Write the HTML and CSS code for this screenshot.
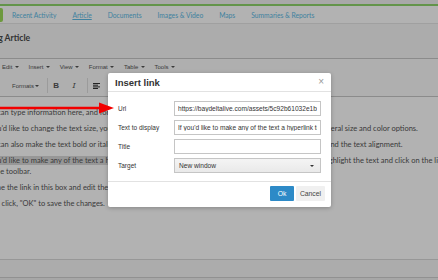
FILE: index.html
```html
<!DOCTYPE html>
<html lang="en">
<head>
    <meta charset="UTF-8">
    <meta name="viewport" content="width=device-width, initial-scale=1.0">
    <title>Editing Article</title>
    <link rel="stylesheet" href="styles.css">
</head>
<body>
    <div class="page">
        <div class="topbar"></div>
        <nav class="tabs">
            <a href="#" class="new-btn">New</a>
            <a href="#">Recent Activity</a>
            <a href="#" class="current">Article</a>
            <a href="#">Documents</a>
            <a href="#">Images &amp; Video</a>
            <a href="#">Maps</a>
            <a href="#">Summaries &amp; Reports</a>
        </nav>
        <div class="title-bar">
            <h1>Editing Article</h1>
        </div>

        <div class="editor">
            <div class="menubar">
                <span class="menu">Edit <i class="caret"></i></span>
                <span class="menu">Insert <i class="caret"></i></span>
                <span class="menu">View <i class="caret"></i></span>
                <span class="menu">Format <i class="caret"></i></span>
                <span class="menu">Table <i class="caret"></i></span>
                <span class="menu">Tools <i class="caret"></i></span>
            </div>
            <div class="toolbar">
                <span class="tool formats">Formats <i class="caret"></i></span>
                <span class="sep"></span>
                <span class="tool bold">B</span>
                <span class="tool italic">I</span>
                <span class="sep"></span>
                <span class="tool">
                    <svg width="7" height="6" viewBox="0 0 7 6"><path d="M0 0.5H7M0 2.2H5M0 3.9H7M0 5.5H5" stroke="#333" stroke-width="1"/></svg>
                </span>
                <span class="tool">
                    <svg width="7" height="6" viewBox="0 0 7 6"><path d="M0 0.5H7M1 2.2H6M0 3.9H7M1 5.5H6" stroke="#333" stroke-width="1"/></svg>
                </span>
            </div>
            <div class="content">
                <p>You can type information here, and format it using the toolbar above.</p>
                <p>If you'd like to change the text size, you can use the Formats dropdown menu in the toolbar, which has several size and color options.</p>
                <p>You can also make the text bold or italic using the buttons in the toolbar, and change the font, the indent and the text alignment.</p>
                <p><span class="selected">If you'd like to make any of the text a hyperlink</span> to another page on this website or an external site, then highlight the text and click on the link icon on the toolbar.</p>
                <p>Define the link in this box and edit the display text if needed.</p>
                <p>Then click, "OK" to save the changes.</p>
            </div>
            <div class="statusbar"></div>
        </div>
        <div class="page-footer"></div>
    </div>

    <div class="backdrop"></div>

    <div class="dialog">
        <div class="dialog-head">
            <span class="dialog-title">Insert link</span>
            <span class="close">&times;</span>
        </div>
        <div class="dialog-body">
            <label for="url">Url</label>
            <input type="text" id="url" value="https://baydeltalive.com/assets/5c92b61032e1b0a1e8a5a7c1">

            <label for="text">Text to display</label>
            <input type="text" id="text" value="If you'd like to make any of the text a hyperlink to another page">

            <label for="title">Title</label>
            <input type="text" id="title">

            <label for="target">Target</label>
            <div class="select" id="target">New window <i class="caret"></i></div>
        </div>
        <div class="dialog-foot">
            <button class="ok">Ok</button>
            <button class="cancel">Cancel</button>
        </div>
    </div>

    <svg class="arrow" width="116" height="14" viewBox="0 0 116 14">
        <path d="M0 7H102" stroke="#f20000" stroke-width="2.4"/>
        <polygon points="99,1.5 114,7 99,12.5" fill="#f20000"/>
    </svg>
</body>
</html>
```

FILE: styles.css
```css
body {
    margin: 0;
    width: 438px;
    height: 280px;
    overflow: hidden;
    background-color: #fff;
    position: relative;
}
.page {
    margin-left: -30px;
    width: 496px;
    font-family: Lato, "Open Sans", sans-serif;
    color: #555;
}
.topbar {
    height: 4px;
    background-color: #f1f1f1;
    border-bottom: 2px solid #8fd46a;
}
.tabs {
    display: flex;
    align-items: center;
    gap: 16px;
    height: 17px;
    background-color: #fff;
    border-bottom: 1px solid #e6e6e6;
    font-size: 6.7px;
}
.tabs a {
    color: #5dbbe6;
    text-decoration: none;
}
.tabs a.current {
    text-decoration: underline;
}
.tabs .new-btn {
    width: 33px;
    height: 14px;
    margin-right: -7px;
    background-color: #9ddc5a;
    border-radius: 2px;
    color: #fff;
    text-align: center;
    line-height: 14px;
}
.title-bar {
    height: 34px;
    background-color: #f6f6f6;
    padding-left: 6px;
}
h1 {
    margin: 0;
    padding-top: 8px;
    font-size: 8.6px;
    line-height: 12px;
    color: #4a4a4a;
}
.editor {
    border-top: 1px solid #c8c8c8;
}
.menubar {
    display: flex;
    align-items: center;
    gap: 9.5px;
    height: 16px;
    padding-left: 32px;
    background-color: #fbfbfb;
    font-family: "Liberation Sans", Arial, sans-serif;
    font-size: 6px;
}
.caret {
    display: inline-block;
    vertical-align: middle;
    border-top: 2px solid #555;
    border-left: 2px solid transparent;
    border-right: 2px solid transparent;
    margin-left: 1px;
}
.toolbar {
    display: flex;
    align-items: center;
    height: 21px;
    padding-left: 40px;
    background-color: #fbfbfb;
    border-bottom: 1px solid #c8c8c8;
    font-family: "Liberation Sans", Arial, sans-serif;
    font-size: 6px;
}
.tool {
    display: flex;
    align-items: center;
    justify-content: center;
    height: 14px;
    min-width: 14px;
    margin-right: 4px;
}
.formats {
    padding: 0 2px;
}
.bold {
    font-weight: bold;
    font-size: 8px;
}
.italic {
    font-family: "DejaVu Serif", serif;
    font-style: italic;
    font-size: 8px;
}
.sep {
    width: 1px;
    height: 15px;
    background-color: #dedede;
    margin: 0 1px 0 2px;
}
.content {
    height: 152px;
    padding: 10px 0 0 13px;
    background-color: #fff;
    font-size: 7.5px;
    line-height: 11px;
}
.content p {
    margin: 0 0 5px;
}
.selected {
    background-color: #d9d9d9;
}
.statusbar {
    height: 17px;
    background-color: #f6f6f6;
    border-top: 1px solid #d8d8d8;
    border-bottom: 1px solid #d0d0d0;
}
.page-footer {
    height: 10px;
    background-color: #f0f0f0;
}
.backdrop {
    position: absolute;
    inset: 0;
    background-color: rgba(0, 0, 0, 0.3);
}
.dialog {
    position: absolute;
    left: 108px;
    top: 73px;
    width: 223px;
    background-color: #fff;
    border-radius: 2px;
    box-shadow: 0 1px 4px rgba(0, 0, 0, 0.25);
    font-family: "Liberation Sans", Arial, sans-serif;
    color: #333;
}
.dialog-head {
    display: flex;
    align-items: center;
    justify-content: space-between;
    height: 18px;
    padding: 0 7px;
    border-bottom: 1px solid #e2e2e2;
}
.dialog-title {
    font-weight: bold;
    font-size: 9.5px;
}
.close {
    color: #999;
    font-size: 10px;
    line-height: 10px;
}
.dialog-body {
    display: grid;
    grid-template-columns: 56px 147px;
    grid-auto-rows: 15px;
    row-gap: 4px;
    align-items: center;
    padding: 9px 10px 8px;
}
.dialog-body label {
    font-size: 6.5px;
}
.dialog-body input, .select {
    box-sizing: border-box;
    width: 100%;
    height: 15px;
    margin: 0;
    padding: 0 3px;
    border: 1px solid #c5c5c5;
    border-radius: 0;
    font-family: "Liberation Sans", Arial, sans-serif;
    font-size: 6.6px;
    color: #333;
}
.select {
    display: flex;
    align-items: center;
    justify-content: space-between;
    padding: 0 6px 0 4px;
    background: linear-gradient(#f4f4f4, #e9e9e9);
}
.select .caret {
    border-top-color: #333;
}
.dialog-foot {
    display: flex;
    justify-content: flex-end;
    gap: 2px;
    padding: 4px 6px 6px;
    border-top: 1px solid #e2e2e2;
}
button {
    height: 15px;
    padding: 0;
    border: none;
    border-radius: 1px;
    font-family: "Liberation Sans", Arial, sans-serif;
    font-size: 6.8px;
    cursor: pointer;
}
.ok {
    width: 24px;
    background-color: #2d8ac7;
    color: #fff;
}
.cancel {
    width: 29px;
    background-color: #f0f0f0;
    color: #444;
}
.arrow {
    position: absolute;
    left: 0;
    top: 101px;
}
```
